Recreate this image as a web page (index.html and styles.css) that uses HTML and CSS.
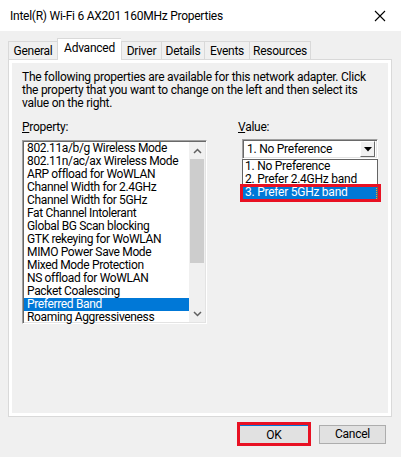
FILE: index.html
```html
<!DOCTYPE html>
<html>
<head>
<meta charset="utf-8">
<link rel="stylesheet" href="styles.css">
</head>
<body>
<div class="window">
  <div class="titlebar">
    <span class="title">Intel(R) Wi-Fi 6 AX201 160MHz Properties</span>
    <span class="close"><svg width="12" height="12" viewBox="0 0 12 12"><path d="M1 1L11 11M11 1L1 11" stroke="#000" stroke-width="1.1" fill="none"/></svg></span>
  </div>
  <div class="body">
    <div class="tabs">
      <div class="tab t-general">General</div>
      <div class="tab t-adv active">Advanced</div>
      <div class="tab t-driver">Driver</div>
      <div class="tab t-details">Details</div>
      <div class="tab t-events">Events</div>
      <div class="tab t-res">Resources</div>
    </div>
    <div class="panel">
      <div class="page">
        <p class="desc">The following properties are available for this network adapter. Click<br>the property that you want to change on the left and then select its<br>value on the right.</p>
        <div class="cols">
          <div class="col-left">
            <div class="label"><u>P</u>roperty:</div>
            <div class="listbox">
              <ul class="items">
                <li>802.11a/b/g Wireless Mode</li>
                <li>802.11n/ac/ax Wireless Mode</li>
                <li>ARP offload for WoWLAN</li>
                <li>Channel Width for 2.4GHz</li>
                <li>Channel Width for 5GHz</li>
                <li>Fat Channel Intolerant</li>
                <li>Global BG Scan blocking</li>
                <li>GTK rekeying for WoWLAN</li>
                <li>MIMO Power Save Mode</li>
                <li>Mixed Mode Protection</li>
                <li>NS offload for WoWLAN</li>
                <li>Packet Coalescing</li>
                <li class="sel">Preferred Band</li>
                <li>Roaming Aggressiveness</li>
              </ul>
              <div class="scrollbar">
                <div class="arrow"><svg width="9" height="6" viewBox="0 0 9 6"><path d="M1 5L4.5 1.5L8 5" stroke="#606060" stroke-width="1.5" fill="none"/></svg></div>
                <div class="track"><div class="thumb"></div></div>
                <div class="arrow"><svg width="9" height="6" viewBox="0 0 9 6"><path d="M1 1L4.5 4.5L8 1" stroke="#606060" stroke-width="1.5" fill="none"/></svg></div>
              </div>
            </div>
          </div>
          <div class="col-right">
            <div class="label"><u>V</u>alue:</div>
            <div class="combo-wrap">
              <div class="combo">
                <span class="combo-text">1. No Preference</span>
                <span class="drop"><svg width="8" height="5" viewBox="0 0 8 5"><path d="M0 0H8L4 4.5Z" fill="#000"/></svg></span>
              </div>
              <ul class="dropdown">
                <li>1. No Preference</li>
                <li>2. Prefer 2.4GHz band</li>
                <li class="sel">3. Prefer 5GHz band</li>
              </ul>
            </div>
          </div>
        </div>
      </div>
    </div>
    <div class="buttons">
      <div class="ok-frame"><button class="btn ok">OK</button></div>
      <button class="btn cancel">Cancel</button>
    </div>
  </div>
</div>
</body>
</html>
```
FILE: styles.css
```css
* { box-sizing: border-box; }
html, body { margin: 0; padding: 0; }
body {
  background: #f0f0f0;
  font-family: Roboto, "Liberation Sans", Arial, sans-serif;
  font-size: 12px;
  letter-spacing: -0.25px;
  color: #000;
  width: 401px;
  height: 457px;
  overflow: hidden;
}
.window { width: 401px; height: 457px; }
.titlebar {
  height: 31px;
  background: #fff;
  display: flex;
  align-items: center;
  justify-content: space-between;
  padding: 0 15px 0 10px;
}
.title { font-size: 12px; }
.close { display: flex; align-items: center; }
.body { padding: 7px 9px 0 8px; }
.tabs {
  display: flex;
  align-items: flex-end;
  height: 21px;
  position: relative;
  z-index: 1;
}
.tab {
  height: 18px;
  border: 1px solid #d9d9d9;
  border-bottom: none;
  border-right: none;
  background: #f0f0f0;
  display: flex;
  align-items: center;
  justify-content: center;
  padding-top: 1px;
  white-space: nowrap;
}
.tab:last-child { border-right: 1px solid #d9d9d9; }
.tab.active {
  height: 22px;
  margin-bottom: -1px;
  background: #fff;
  padding-top: 0;
  padding-bottom: 4px;
}
.t-general { width: 49px; }
.t-adv { width: 64px; }
.t-driver { width: 40px; }
.t-details { width: 43px; }
.t-events { width: 45px; }
.t-res { width: 62px; }
.panel {
  width: 384px;
  height: 358px;
  border: 1px solid #d9d9d9;
  background: #fff;
  padding: 3px;
}
.page {
  height: 100%;
  background: #f0f0f0;
  padding: 8px 10px 0 10px;
}
.desc {
  margin: 0;
  line-height: 13px;
  white-space: nowrap;
}
.cols {
  display: flex;
  gap: 31px;
  margin-top: 11px;
}
.label { line-height: 13px; }
.col-left { width: 185px; }
.col-right { width: 140px; }
.listbox {
  margin-top: 6px;
  width: 185px;
  height: 184px;
  background: #fff;
  border: 1px solid;
  border-color: #a0a0a0 #fff #fff #a0a0a0;
  box-shadow: inset 1px 1px #696969, inset -1px -1px #e3e3e3;
  padding: 1px;
  display: flex;
}
.items {
  list-style: none;
  margin: 0;
  padding: 0;
  flex: 1;
}
.items li {
  height: 13px;
  line-height: 13px;
  padding-left: 3px;
  white-space: nowrap;
  letter-spacing: -0.35px;
}
.items li.sel { background: #0078d7; color: #fff; }
.scrollbar {
  width: 16px;
  background: #f0f0f0;
  display: flex;
  flex-direction: column;
}
.arrow {
  height: 17px;
  display: flex;
  align-items: center;
  justify-content: center;
}
.track { flex: 1; padding: 0 1px; }
.thumb { height: 104px; background: #cdcdcd; }
.combo-wrap { margin-top: 5px; margin-left: 4px; width: 136px; }
.combo {
  height: 20px;
  background: #fff;
  border: 1px solid;
  border-color: #a0a0a0 #fff #fff #a0a0a0;
  box-shadow: inset 1px 1px #696969, inset -1px -1px #e3e3e3;
  display: flex;
  align-items: center;
  justify-content: space-between;
  padding: 2px 2px 2px 4px;
}
.drop {
  width: 15px;
  height: 16px;
  background: #f0f0f0;
  border: 1px solid;
  border-color: #fff #696969 #696969 #fff;
  display: flex;
  align-items: center;
  justify-content: center;
}
.dropdown {
  list-style: none;
  margin: 0;
  padding: 0;
  background: #fff;
  border: 1px solid #646464;
  height: 42px;
}
.dropdown li {
  height: 13px;
  line-height: 13px;
  padding-left: 2px;
  white-space: nowrap;
}
.dropdown li.sel {
  background: #0078d7;
  color: #fff;
  position: relative;
  border-right: 1px dotted #f0a030;
}
.dropdown li.sel::after {
  content: "";
  position: absolute;
  left: -3px;
  right: -5px;
  top: -2px;
  bottom: -3px;
  border: 3px solid #e81123;
}
.buttons {
  display: flex;
  justify-content: flex-end;
  align-items: center;
  gap: 8px;
  padding-right: 6px;
  margin-top: 5px;
}
.btn {
  font-family: inherit;
  font-size: 12px;
  letter-spacing: inherit;
  background: #e1e1e1;
  color: #000;
  margin: 0;
  padding: 0;
}
.ok-frame { border: 3px solid #e81123; }
.ok {
  width: 68px;
  height: 18px;
  border: none;
  border-top: 1px solid #0078d7;
  display: block;
}
.cancel {
  width: 67px;
  height: 19px;
  border: 1px solid #adadad;
}
```
